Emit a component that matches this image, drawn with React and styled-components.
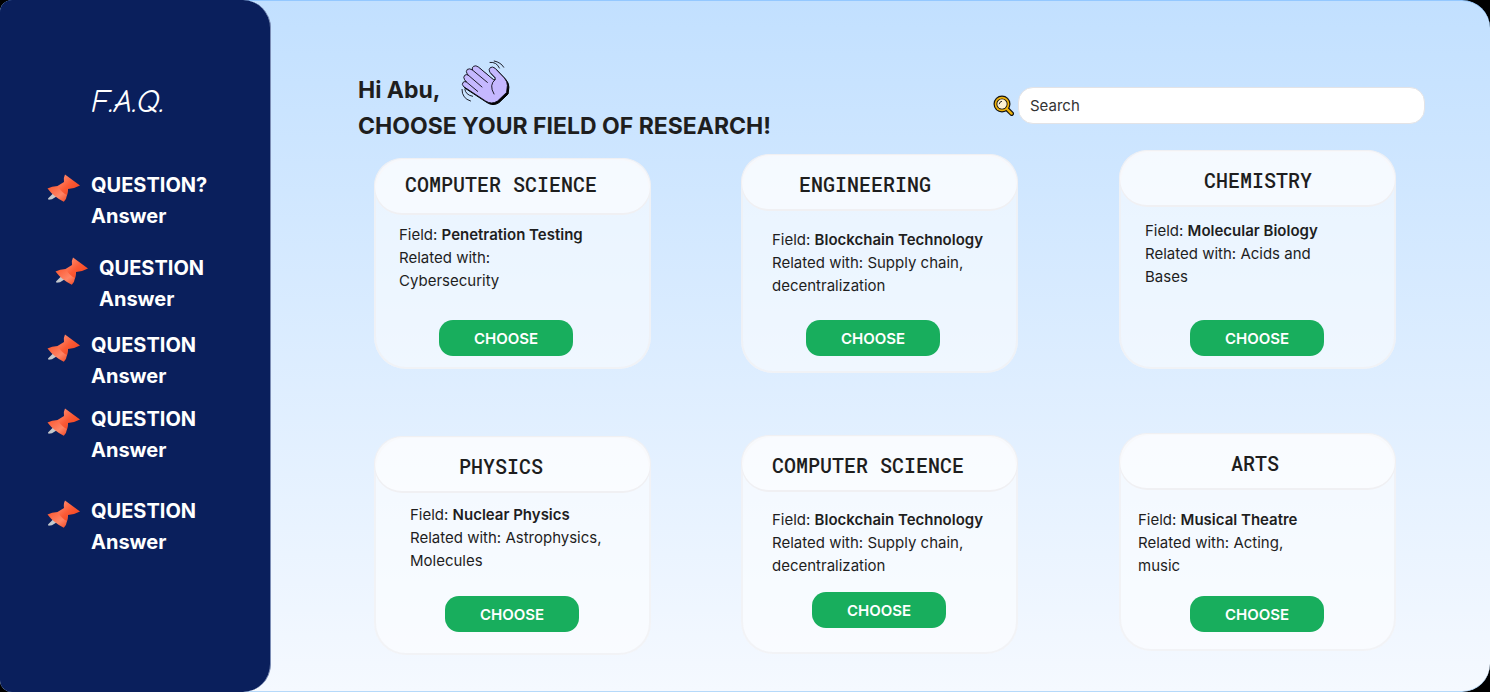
import React from 'react';
import styled, { createGlobalStyle } from 'styled-components';

const GlobalStyle = createGlobalStyle`
  *, *::before, *::after { box-sizing: border-box; }
  body { margin: 0; background: #000; color: #1e1e1e; font-family: Inter, "Liberation Sans", sans-serif; }
  h1, h2, h3, p, ul { margin: 0; padding: 0; }
`;

const Page = styled.div`
  display: flex;
  min-height: 100vh;
  border-top: 1px solid #94c8ff;
  border-bottom: 1px solid #b5d9fa;
  border-radius: 12px 28px 28px 12px;
  background: linear-gradient(#c2e0ff, #f5f9ff);
`;

const Sidebar = styled.aside`
  flex: 0 0 271px;
  margin: -1px 0;
  padding: 82px 16px 32px 47px;
  border-right: 1px solid #7c8db5;
  border-radius: 12px 28px 28px 12px;
  background: #0a1f5c;
  color: #fff;
`;

const SidebarTitle = styled.h2`
  padding-left: 44px;
  font: italic 500 32px/40px "Comic Neue", "Segoe Print", Lato, cursive;
`;

const QuestionList = styled.ul`
  padding-top: 48px;
  list-style: none;
`;

const Question = styled.li`
  display: flex;
  gap: 11px;
  margin-top: ${(p) => p.$gap}px;
  padding-left: ${(p) => p.$indent}px;
  font-size: 20px;
  font-weight: 700;
  line-height: 31px;
`;

const QuestionTitle = styled.h3`
  font: inherit;
`;

const PinIcon = styled.svg`
  flex: none;
  width: 33px;
  height: 28px;
  margin-top: 4px;
`;

const Main = styled.main`
  flex: 1;
  min-width: 0;
  padding: 59px 65px 36px 87px;
`;

const TopBar = styled.header`
  display: flex;
  justify-content: space-between;
  align-items: center;
  gap: 32px;
`;

const Heading = styled.h1`
  font-size: 23px;
  font-weight: 700;
  line-height: 36px;
  white-space: nowrap;
`;

const Greeting = styled.span`
  display: flex;
  align-items: flex-end;
  gap: 20px;
  height: 48px;
`;

const WaveIcon = styled.svg`
  align-self: flex-start;
  width: 50px;
  height: 46px;
`;

const SearchForm = styled.form`
  display: flex;
  align-items: center;
  gap: 4px;
  flex: 0 1 432px;
  min-width: 0;
  margin-top: 6px;
`;

const SearchLabel = styled.label`
  flex: none;
  width: 21px;
  height: 21px;
`;

const SearchInput = styled.input`
  flex: 1;
  min-width: 0;
  height: 37px;
  padding: 0 11px;
  border: 1px solid #e3e3e6;
  border-radius: 15px;
  background: #fff;
  font: 400 15px Inter, "Liberation Sans", sans-serif;
  &::placeholder { color: #333; opacity: 1; }
`;

const CardGrid = styled.section`
  display: grid;
  grid-template-columns: minmax(277px, 367fr) minmax(277px, 378fr) 277px;
  row-gap: 60px;
  align-items: start;
  margin: 6px 29px 0 16px;
`;

const Card = styled.article`
  display: flex;
  flex-direction: column;
  width: 277px;
  min-height: ${(p) => p.$height}px;
  margin-top: ${(p) => p.$drop}px;
  padding-bottom: ${(p) => p.$bottom}px;
  border-radius: 32px;
  background: rgba(255, 255, 255, 0.55);
  box-shadow: inset 0 0 0 2px rgba(240, 240, 242, 0.7);
`;

const CardTitle = styled.h2`
  height: 57px;
  padding-top: ${(p) => p.$top}px;
  padding-left: ${(p) => p.$inset}px;
  border: solid #f0f0f3;
  border-width: 1px 1px 2px;
  border-radius: 28px;
  background: rgba(253, 253, 255, 0.6);
  font: 500 20px/28px "Roboto Mono", "DejaVu Sans Mono", monospace;
  white-space: nowrap;
`;

const CardText = styled.p`
  padding: ${(p) => p.$top}px 0 0 ${(p) => p.$inset}px;
  font-size: 15px;
  line-height: 23px;
  white-space: nowrap;
`;

const Field = styled.strong`
  font-weight: 600;
`;

const ChooseButton = styled.button`
  width: 134px;
  height: 36px;
  margin-top: auto;
  margin-left: ${(p) => p.$inset}px;
  padding: 0;
  border: 0;
  border-radius: 14px;
  background: #18ae5d;
  color: #fff;
  font: 600 15px Inter, "Liberation Sans", sans-serif;
  cursor: pointer;
`;

const questions = [
  { title: 'QUESTION?', gap: 0, indent: 0 },
  { title: 'QUESTION', gap: 21, indent: 8 },
  { title: 'QUESTION', gap: 15, indent: 0 },
  { title: 'QUESTION', gap: 12, indent: 0 },
  { title: 'QUESTION', gap: 30, indent: 0 },
];

const cards = [
  { title: 'COMPUTER SCIENCE', field: 'Penetration Testing', related: ['', 'Cybersecurity'], height: 211, drop: 8, bottom: 13, titleTop: 11, titleInset: 30, textTop: 8, textInset: 25, buttonInset: 65 },
  { title: 'ENGINEERING', field: 'Blockchain Technology', related: ['Supply chain,', 'decentralization'], height: 219, drop: 4, bottom: 17, titleTop: 15, titleInset: 57, textTop: 17, textInset: 31, buttonInset: 65 },
  { title: 'CHEMISTRY', field: 'Molecular Biology', related: ['Acids and', 'Bases'], height: 219, drop: 0, bottom: 13, titleTop: 15, titleInset: 84, textTop: 12, textInset: 26, buttonInset: 71 },
  { title: 'PHYSICS', field: 'Nuclear Physics', related: ['Astrophysics,', 'Molecules'], height: 219, drop: 3, bottom: 23, titleTop: 15, titleInset: 84, textTop: 10, textInset: 36, buttonInset: 71 },
  { title: 'COMPUTER SCIENCE', field: 'Blockchain Technology', related: ['Supply chain,', 'decentralization'], height: 219, drop: 2, bottom: 26, titleTop: 15, titleInset: 30, textTop: 16, textInset: 31, buttonInset: 71 },
  { title: 'ARTS', field: 'Musical Theatre', related: ['Acting,', 'music'], height: 218, drop: 0, bottom: 19, titleTop: 15, titleInset: 111, textTop: 18, textInset: 19, buttonInset: 71 },
];

function Pin() {
  return (
    <PinIcon viewBox="7 8.5 33 28" aria-hidden="true">
      <defs>
        <linearGradient id="pinBody" x1="0" y1="0" x2="1" y2="1">
          <stop offset="0" stopColor="#ff9b80" />
          <stop offset="0.5" stopColor="#fb5a35" />
          <stop offset="1" stopColor="#f03c18" />
        </linearGradient>
        <linearGradient id="pinBase" x1="0" y1="0" x2="1" y2="1">
          <stop offset="0" stopColor="#fa5730" />
          <stop offset="0.6" stopColor="#ff8566" />
          <stop offset="1" stopColor="#f04420" />
        </linearGradient>
      </defs>
      <path d="M14 27 L8 33 L8.5 34.3 L12 33.8 L18 30Z" fill="#c4c8cc" />
      <path d="M7.5 23 Q12 20.3 18 20.4 L28 23.5 L27.2 29 Q26.5 33.5 23.8 36.3 Q14 31.5 7.5 23Z" fill="url(#pinBase)" />
      <path d="M25 9 L40 20 Q34 23.3 28 23.5 L27 29.5 Q23 28.5 17.5 20.6 L24 16.5 Q23.3 12 25 9Z" fill="url(#pinBody)" />
    </PinIcon>
  );
}

const HAND =
  'M8.6 31.6 Q6.4 29.4 8 27.4 Q9.6 26 11.4 27 L9.6 24.8 Q7.8 22 9.8 20.2 Q11.4 19 13.3 20.2 L12.3 19.2 Q10.4 16.4 12.3 14.4 Q14.6 13 17.4 15 Q16.6 12.6 18.6 11.3 Q20.8 10 23.4 12 L38.4 24.6 Q40.6 25.4 40.2 22.8 L34.8 17.2 Q33.2 14.4 35.3 12.6 Q37.6 11.2 40 13.2 L49.4 23 Q52.4 26.5 52.4 30.5 L51.6 37.4 L42.6 46 Q36.6 50 30.4 45.9Z';

function Wave() {
  return (
    <WaveIcon viewBox="6 5 50 46" aria-hidden="true">
      <path d={HAND} fill="#000" stroke="#000" transform="translate(1.5 1.6)" />
      <path d={HAND} fill="#c5b8ff" stroke="#0a0a14" strokeWidth="0.9" strokeLinejoin="round" />
      <g fill="none" stroke="#0a0a14" strokeWidth="0.9" strokeLinecap="round">
        <path d="M17.4 15 L32.4 27.4 M13.3 20.2 L27 32 M11.4 27 L22.7 36.4 M40.2 24.5 Q33.5 29.8 39 39" />
        <path d="M35 7.4 Q41.5 6.6 44.4 13 M39.2 6 Q46 7.4 48.7 12.2" />
        <path d="M9.8 34 Q10.5 40 17.6 41.3 M7 34.4 Q6.9 43.4 15.5 46" />
      </g>
    </WaveIcon>
  );
}

function Magnifier() {
  return (
    <svg width="21" height="21" viewBox="0 0 21 21" role="img" aria-label="Search">
      <path d="M13.5 13.5 L18.7 18.7" stroke="#111" strokeWidth="4.6" strokeLinecap="round" />
      <circle cx="9" cy="9" r="8.5" fill="#111" />
      <path d="M14 14 L18.6 18.6" stroke="#efb20b" strokeWidth="2.4" strokeLinecap="round" />
      <circle cx="9" cy="9" r="7.3" fill="#efb20b" />
      <circle cx="9" cy="9" r="5.6" fill="#111" />
      <circle cx="9" cy="9" r="4.7" fill="#fdf1d2" />
      <path d="M6.2 8.8 Q6.4 6.7 8.6 6.3" fill="none" stroke="#222" strokeWidth="1" strokeLinecap="round" />
    </svg>
  );
}

function ResearchCard({ card }) {
  return (
    <Card $height={card.height} $drop={card.drop} $bottom={card.bottom}>
      <CardTitle $top={card.titleTop} $inset={card.titleInset}>{card.title}</CardTitle>
      <CardText $top={card.textTop} $inset={card.textInset}>
        Field: <Field>{card.field}</Field>
        <br />
        Related with: {card.related[0]}
        <br />
        {card.related[1]}
      </CardText>
      <ChooseButton type="button" $inset={card.buttonInset}>CHOOSE</ChooseButton>
    </Card>
  );
}

export default function App() {
  return (
    <>
      <GlobalStyle />
      <Page>
        <Sidebar>
          <SidebarTitle>F.A.Q.</SidebarTitle>
          <QuestionList>
            {questions.map((q, i) => (
              <Question key={i} $gap={q.gap} $indent={q.indent}>
                <Pin />
                <div>
                  <QuestionTitle>{q.title}</QuestionTitle>
                  <p>Answer</p>
                </div>
              </Question>
            ))}
          </QuestionList>
        </Sidebar>
        <Main>
          <TopBar>
            <Heading>
              <Greeting>Hi Abu, <Wave /></Greeting>
              CHOOSE YOUR FIELD OF RESEARCH!
            </Heading>
            <SearchForm role="search">
              <SearchLabel htmlFor="search"><Magnifier /></SearchLabel>
              <SearchInput id="search" type="text" placeholder="Search" />
            </SearchForm>
          </TopBar>
          <CardGrid>
            {cards.map((card, i) => <ResearchCard key={i} card={card} />)}
          </CardGrid>
        </Main>
      </Page>
    </>
  );
}
